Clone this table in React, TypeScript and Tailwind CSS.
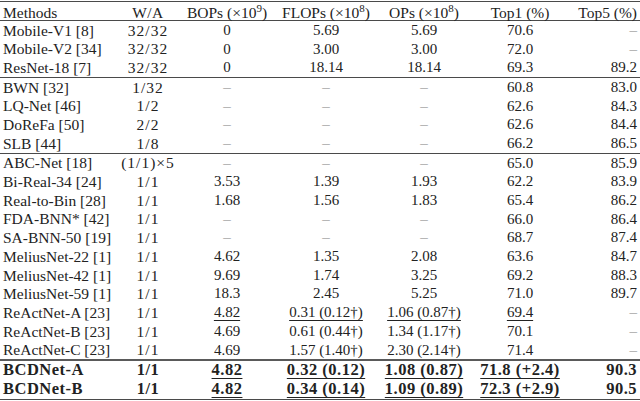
import type { ReactNode } from "react"

type Cells = [ReactNode, ReactNode, ReactNode, ReactNode, ReactNode, ReactNode, ReactNode]

const Dash = () => <span className="text-[#a6a6a6]">–</span>

const U = ({ children }: { children: ReactNode }) => (
  <span className="underline decoration-1 underline-offset-[3px] [text-decoration-skip-ink:none]">
    {children}
  </span>
)

const Sup = ({ children }: { children: ReactNode }) => (
  <span className="relative -top-[5px] text-[11px]">{children}</span>
)

const cols = "grid grid-cols-[118px_60px_98px_100px_96px_96px_1fr] items-center whitespace-nowrap"

function Row({ cells, bold = false }: { cells: Cells; bold?: boolean }) {
  // LaTeX bold-extended runs wider than Times bold, hence the tracking
  const name = bold ? "pl-[3px] text-[16.5px] tracking-[0.5px]" : "pl-[3px] text-[15.5px]"
  const wa = bold
    ? "flex justify-center text-[16.5px] tracking-[0.5px]"
    : "flex justify-center text-[15.5px] tracking-[1px]"
  const num = bold
    ? "flex justify-center text-[16.5px] tracking-[0.5px]"
    : "flex justify-center text-[15px]"
  const last = bold
    ? "flex justify-end pr-[3px] text-[16.5px] tracking-[0.5px]"
    : "flex justify-end pr-[3px] text-[15px]"

  return (
    <div className={`${cols} h-[18.7px] ${bold ? "font-bold" : ""}`}>
      <div className={name}>{cells[0]}</div>
      <div className={wa}>{cells[1]}</div>
      <div className={num}>{cells[2]}</div>
      <div className={num}>{cells[3]}</div>
      <div className={num}>{cells[4]}</div>
      <div className={num}>{cells[5]}</div>
      <div className={last}>{cells[6]}</div>
    </div>
  )
}

const Rule = ({ thick = false }: { thick?: boolean }) => (
  <div className={thick ? "h-[2px] bg-[#5a5a5a]" : "h-px bg-[#4a4a4a]"} />
)

const d = <Dash />

const fullPrecision: Cells[] = [
  ["Mobile-V1 [8]", "32/32", "0", "5.69", "5.69", "70.6", d],
  ["Mobile-V2 [34]", "32/32", "0", "3.00", "3.00", "72.0", d],
  ["ResNet-18 [7]", "32/32", "0", "18.14", "18.14", "69.3", "89.2"],
]

const lowBit: Cells[] = [
  ["BWN [32]", "1/32", d, d, d, "60.8", "83.0"],
  ["LQ-Net [46]", "1/2", d, d, d, "62.6", "84.3"],
  ["DoReFa [50]", "2/2", d, d, d, "62.6", "84.4"],
  ["SLB [44]", "1/8", d, d, d, "66.2", "86.5"],
]

const binary: Cells[] = [
  ["ABC-Net [18]", "(1/1)×5", d, d, d, "65.0", "85.9"],
  ["Bi-Real-34 [24]", "1/1", "3.53", "1.39", "1.93", "62.2", "83.9"],
  ["Real-to-Bin [28]", "1/1", "1.68", "1.56", "1.83", "65.4", "86.2"],
  ["FDA-BNN* [42]", "1/1", d, d, d, "66.0", "86.4"],
  ["SA-BNN-50 [19]", "1/1", d, d, d, "68.7", "87.4"],
  ["MeliusNet-22 [1]", "1/1", "4.62", "1.35", "2.08", "63.6", "84.7"],
  ["MeliusNet-42 [1]", "1/1", "9.69", "1.74", "3.25", "69.2", "88.3"],
  ["MeliusNet-59 [1]", "1/1", "18.3", "2.45", "5.25", "71.0", "89.7"],
  [
    "ReActNet-A [23]",
    "1/1",
    <U>4.82</U>,
    <U>0.31 (0.12†)</U>,
    <U>1.06 (0.87†)</U>,
    <U>69.4</U>,
    d,
  ],
  ["ReActNet-B [23]", "1/1", "4.69", "0.61 (0.44†)", "1.34 (1.17†)", "70.1", d],
  ["ReActNet-C [23]", "1/1", "4.69", "1.57 (1.40†)", "2.30 (2.14†)", "71.4", d],
]

const ours: Cells[] = [
  ["BCDNet-A", "1/1", <U>4.82</U>, <U>0.32 (0.12)</U>, <U>1.08 (0.87)</U>, <U>71.8 (+2.4)</U>, "90.3"],
  ["BCDNet-B", "1/1", <U>4.82</U>, <U>0.34 (0.14)</U>, <U>1.09 (0.89)</U>, <U>72.3 (+2.9)</U>, "90.5"],
]

export default function App() {
  return (
    <div className="h-[401px] w-[640px] overflow-hidden bg-white pt-px font-['Liberation_Serif',serif] text-[15.5px] leading-none text-[#222]">
      <Rule />
      <div className={`${cols} h-[18px] leading-[22px]`}>
        <div className="pl-[3px]">Methods</div>
        <div className="flex justify-center tracking-[0.5px]">W/A</div>
        <div className="flex justify-center">
          BOPs (×10<Sup>9</Sup>)
        </div>
        <div className="flex justify-center">
          FLOPs (×10<Sup>8</Sup>)
        </div>
        <div className="flex justify-center">
          OPs (×10<Sup>8</Sup>)
        </div>
        <div className="flex justify-center">Top1 (%)</div>
        <div className="flex justify-end pr-[3px]">Top5 (%)</div>
      </div>
      <Rule />
      {fullPrecision.map((r, i) => (
        <Row key={i} cells={r} />
      ))}
      <Rule />
      {lowBit.map((r, i) => (
        <Row key={i} cells={r} />
      ))}
      <Rule />
      {binary.map((r, i) => (
        <Row key={i} cells={r} />
      ))}
      <Rule thick />
      {ours.map((r, i) => (
        <Row key={i} cells={r} bold />
      ))}
      <Rule />
    </div>
  )
}
